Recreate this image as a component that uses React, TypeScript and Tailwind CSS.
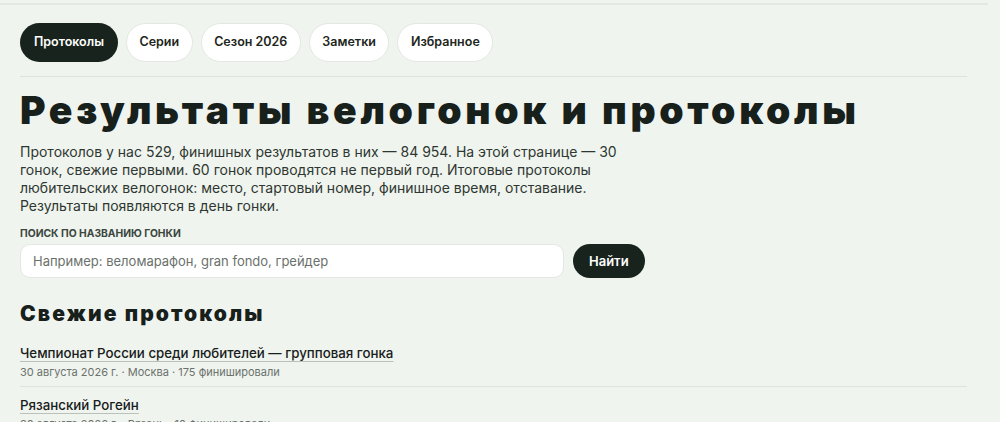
import { useState } from "react";

const tabs = ["Протоколы", "Серии", "Сезон 2026", "Заметки", "Избранное"];

const races = [
  {
    id: 1,
    title: "Чемпионат России среди любителей — групповая гонка",
    meta: "30 августа 2026 г. · Москва · 175 финишировали",
  },
  {
    id: 2,
    title: "Рязанский Рогейн",
    meta: "30 августа 2026 г. · Рязань · 10 финишировали",
  },
];

export default function App() {
  const [active, setActive] = useState("Протоколы");
  const [query, setQuery] = useState("");

  return (
    <div className="min-h-screen bg-[#f0f4ef] text-[#17201b] font-['Inter','Noto_Sans',sans-serif]">
      <div className="h-[5px] w-[988px] border-b-2 border-[#e3e9e2]" />

      <div className="pl-5 pr-[33px]">
        {/* tabs */}
        <nav className="flex gap-2 pt-[18px] pb-[14px] border-b border-[#dde4dc]">
          {tabs.map(tab => (
            <button
              key={tab}
              onClick={() => setActive(tab)}
              className={
                tab === active
                  ? "h-[39px] px-[14px] rounded-full bg-[#17231c] text-white text-[12.5px] font-semibold"
                  : "h-[39px] px-[12.5px] rounded-full bg-white border border-[#e2e8e1] text-[#1d2620] text-[12.5px] font-semibold"
              }
            >
              {tab}
            </button>
          ))}
        </nav>

        <h1 className="mt-[12px] text-[39px] leading-[1.1] font-black tracking-[0.094em] text-[#17201b]">
          Результаты велогонок и протоколы
        </h1>

        <p className="mt-[11px] w-[620px] text-[14px] leading-[18px] text-[#2e3731]">
          Протоколов у нас 529, финишных результатов в них — 84 954. На этой странице — 30 гонок, свежие первыми. 60 гонок проводятся не первый год. Итоговые протоколы любительских велогонок: место, стартовый номер, финишное время, отставание. Результаты появляются в день гонки.
        </p>

        <label htmlFor="search" className="block mt-[11px] text-[10.3px] font-bold uppercase text-[#3c4740]">
          Поиск по названию гонки
        </label>
        <div className="mt-[3px] flex items-center gap-[9px]">
          <input
            id="search"
            type="text"
            value={query}
            onChange={e => setQuery(e.target.value)}
            placeholder="Например: веломарафон, gran fondo, грейдер"
            className="h-[34px] w-[544px] rounded-[10px] bg-white border border-[#e2e8e1] px-3 text-[13px] text-[#17201b] placeholder:text-[#6a716b] outline-none"
          />
          <button className="h-[34px] px-[16px] rounded-full bg-[#17231c] text-white text-[13px] font-semibold">
            Найти
          </button>
        </div>

        <h2 className="mt-[23px] text-[21px] leading-[1.2] font-black tracking-[0.1em]">
          Свежие протоколы
        </h2>

        <ul className="mt-[8px]">
          {races.map(race => (
            <li key={race.id} className="pt-[5px] pb-[6px] border-b border-[#dde4dc]">
              <a
                href="#"
                className="text-[13.3px] font-medium text-[#17201b] underline decoration-[#b8c1ba] underline-offset-[3px]"
              >
                {race.title}
              </a>
              <div className="mt-0 text-[11px] text-[#6b726c]">{race.meta}</div>
            </li>
          ))}
        </ul>
      </div>
    </div>
  );
}
